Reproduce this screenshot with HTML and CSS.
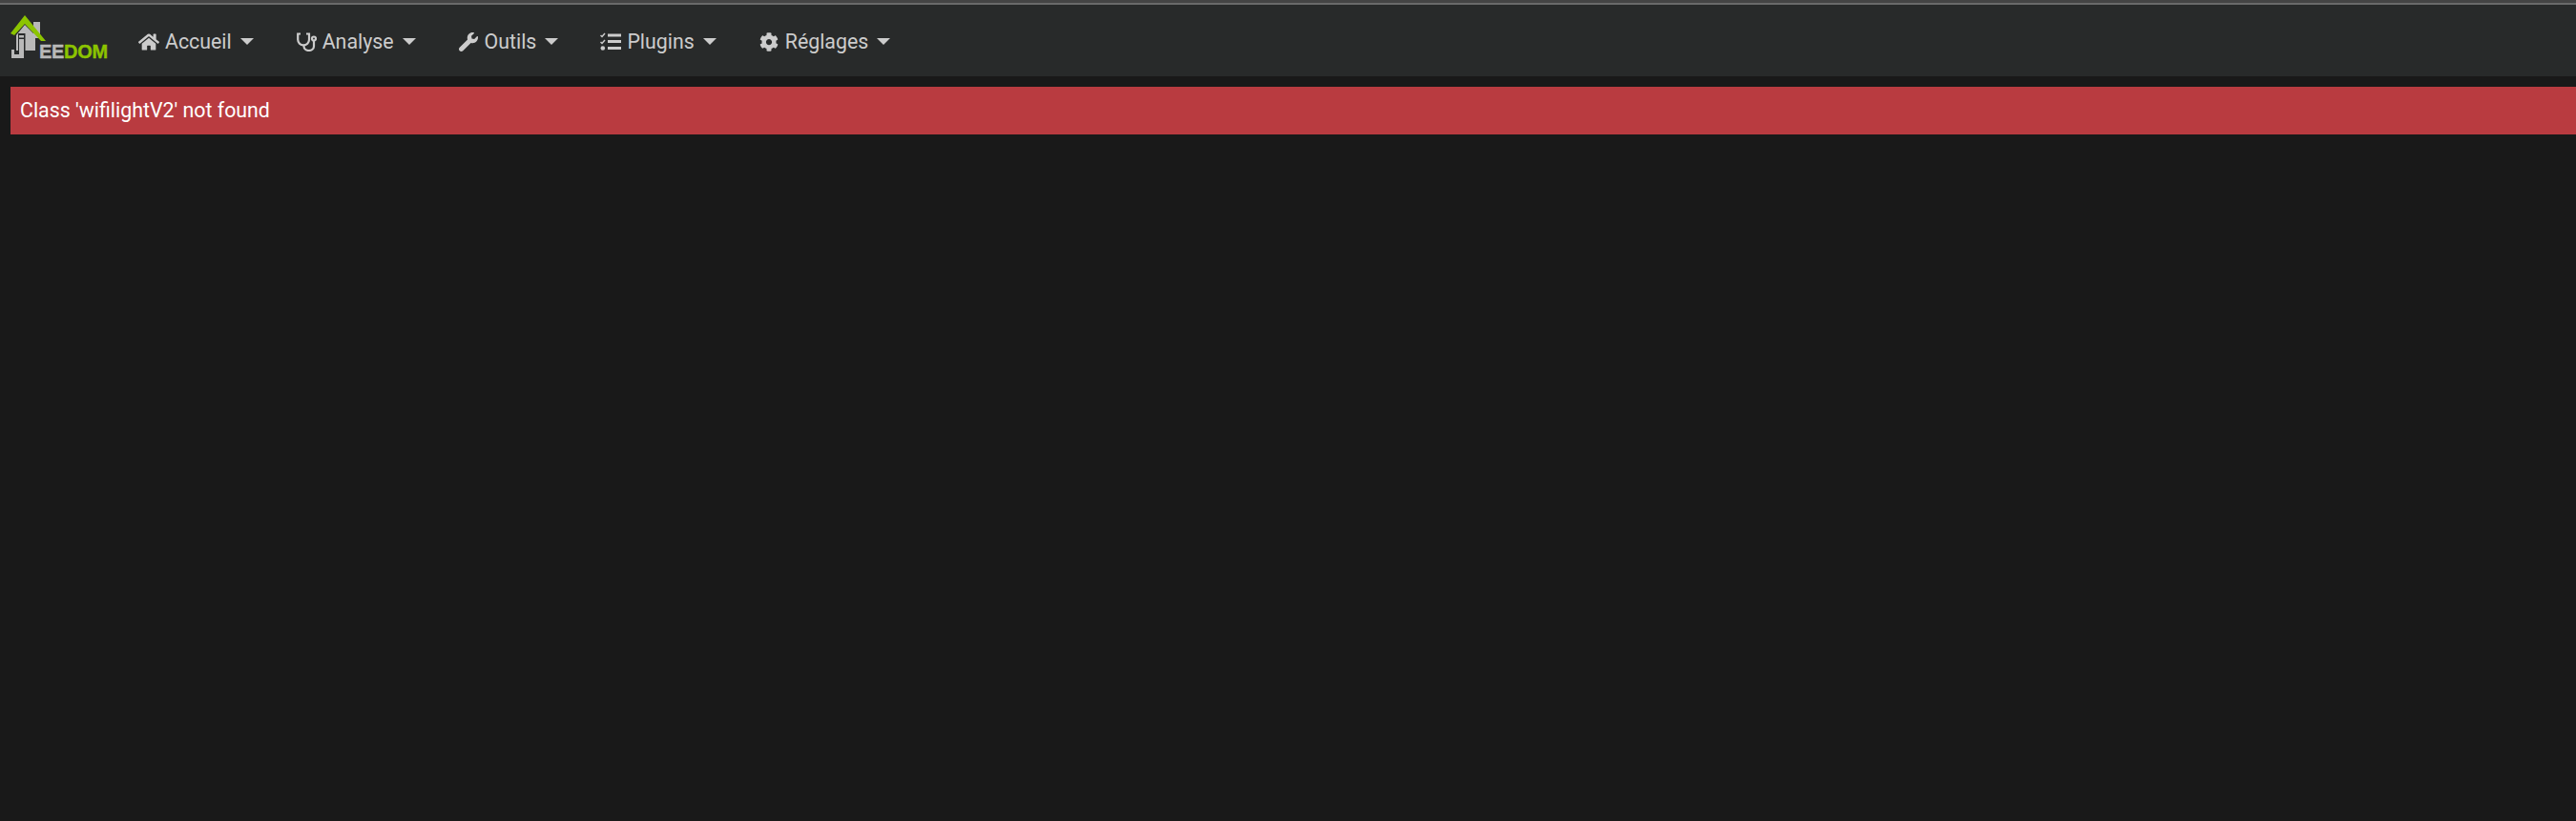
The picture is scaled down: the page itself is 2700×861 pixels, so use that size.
FILE: index.html
```html
<!DOCTYPE html>
<html lang="fr">
<head>
<meta charset="utf-8">
<title>Jeedom</title>
<link rel="stylesheet" href="styles.css">
</head>
<body>
<div class="topline"></div>
<nav class="navbar">
  <a class="brand" href="#">
    <svg class="house" width="38" height="45" viewBox="0 0 38 45">
      <path class="wall" d="M6 21 L15 10 L24 19 L24 7 L31 7 L31 24 L26 24 L26 37 L6 37 Z"/>
      <rect class="dark" x="8" y="19" width="7.500" height="20"/>
      <rect class="wall" x="9" y="21" width="5" height="2.500"/>
      <rect class="wall" x="9" y="25" width="5" height="20"/>
      <path class="wall" d="M1 36 L4 36 L4 41 L9 41 L14 41 L14 45 L1 45 Z"/>
      <path class="roof" d="M0 19 L15 0 L37 27 L32 27 L15 9 L4 21 Z"/>
    </svg>
    <span class="brand-text"><span class="ee">EE</span><span class="dom">DOM</span></span>
  </a>
  <ul class="menu">
    <li class="item">
      <svg class="ico" viewBox="0 0 576 512"><path d="M280.400 148.300 96 300.100V464a16 16 0 0 0 16 16l112-.3a16 16 0 0 0 15.900-16V368a16 16 0 0 1 16-16h64a16 16 0 0 1 16 16v95.600a16 16 0 0 0 16 16l112 .4a16 16 0 0 0 16-16V300L295.700 148.300a12.200 12.200 0 0 0-15.300 0zM571.600 251.500 488 182.600V44.100a12 12 0 0 0-12-12h-56a12 12 0 0 0-12 12v72.600L318.500 43a48 48 0 0 0-61 0L4.300 251.500a12 12 0 0 0-1.600 16.900l25.500 31A12 12 0 0 0 45.200 301l235.200-193.700a12.200 12.200 0 0 1 15.300 0L530.900 301a12 12 0 0 0 16.900-1.600l25.500-31a12 12 0 0 0-1.700-16.900z"/></svg>
      <span>Accueil</span><i class="caret"></i>
    </li>
    <li class="item">
      <svg class="ico" viewBox="0 0 22 20"><path class="line" d="M5 1.500H2.200V7.500a5.900 5.900 0 0 0 11.800 0V1.500H11"/><path class="line" d="M8.500 13v1.500a5.250 4.500 0 0 0 10.500 0V8.500"/><circle class="line" cx="19" cy="6.500" r="2"/></svg>
      <span>Analyse</span><i class="caret"></i>
    </li>
    <li class="item">
      <svg class="ico" viewBox="0 0 512 512"><path d="M507.700 109.100c-2.200-9-13.500-12.100-20.100-5.500l-74.400 74.400-67.900-11.300-11.300-67.900 74.400-74.400c6.600-6.600 3.400-17.900-5.700-20.200-47.400-11.700-99.500.9-136.500 37.900-39.600 39.600-50.700 97.100-34.100 147.200L18.700 402.800c-25 25-25 65.500 0 90.500 25 25 65.500 25 90.500 0l213.200-213.200c50.100 16.700 107.500 5.500 147.300-34.200 37-37 49.700-89.200 38-136.800z"/></svg>
      <span>Outils</span><i class="caret"></i>
    </li>
    <li class="item">
      <svg class="ico" viewBox="0 0 22 20"><path class="tick" d="M.5 3 2 4.500 5 1M.5 10 2 11.500 5 8"/><circle cx="2.800" cy="16.500" r="2.300"/><rect x="8" y="1.500" width="14" height="3"/><rect x="8" y="8" width="14" height="3"/><rect x="8" y="15" width="14" height="3"/></svg>
      <span>Plugins</span><i class="caret"></i>
    </li>
    <li class="item">
      <svg class="ico" viewBox="0 0 512 512"><path d="M487.400 315.700l-42.600-24.600c4.300-23.200 4.300-47 0-70.200l42.600-24.600c4.900-2.800 7.100-8.600 5.500-14-11.100-35.600-30-67.800-54.700-94.600-3.800-4.100-10-5.100-14.800-2.300L380.800 110c-17.900-15.400-38.500-27.300-60.800-35.100V25.800c0-5.600-3.900-10.500-9.400-11.700-36.700-8.200-74.300-7.800-109.200 0-5.500 1.200-9.400 6.100-9.400 11.700V75c-22.200 7.900-42.800 19.800-60.800 35.100L88.700 85.500c-4.900-2.800-11-1.900-14.800 2.300-24.700 26.700-43.600 58.900-54.700 94.600-1.700 5.400.6 11.200 5.500 14L67.300 221c-4.300 23.200-4.300 47 0 70.200l-42.600 24.600c-4.900 2.800-7.100 8.600-5.500 14 11.100 35.600 30 67.800 54.700 94.600 3.800 4.100 10 5.100 14.800 2.300l42.600-24.600c17.900 15.400 38.500 27.300 60.800 35.100v49.200c0 5.600 3.900 10.500 9.400 11.700 36.700 8.200 74.300 7.800 109.200 0 5.500-1.200 9.400-6.100 9.400-11.700v-49.200c22.200-7.900 42.800-19.800 60.800-35.100l42.600 24.600c4.900 2.800 11 1.900 14.800-2.300 24.700-26.700 43.600-58.900 54.700-94.600 1.500-5.500-.7-11.300-5.600-14.100zM256 336c-44.100 0-80-35.900-80-80s35.900-80 80-80 80 35.900 80 80-35.900 80-80 80z"/></svg>
      <span>Réglages</span><i class="caret"></i>
    </li>
  </ul>
</nav>
<main class="content">
  <div class="alert">Class 'wifilightV2' not found</div>
</main>
</body>
</html>
```
FILE: styles.css
```css
* { box-sizing: border-box; }
html, body { margin: 0; height: 100%; }
body {
  background: #191919;
  color: #ccc;
  font-family: Roboto, "Liberation Sans", sans-serif;
  font-size: 21.330px;
  overflow: hidden;
}
.topline {
  height: 5px;
  background: #444;
  border-bottom: 2px solid #6a6a6a;
}
.navbar {
  height: 75px;
  background: #282a2a;
  display: flex;
  align-items: center;
  padding-top: 2px;
}
.brand {
  display: flex;
  align-items: flex-end;
  flex: none;
  width: 103px;
  height: 45px;
  margin-left: 11px;
  margin-top: -10px;
  text-decoration: none;
}
.house { flex: none; }
.wall { fill: #b9b9b9; }
.roof { fill: #8cc400; }
.dark { fill: #282a2a; }
.brand-text {
  font-family: "Liberation Sans", sans-serif;
  font-weight: 700;
  font-size: 20px;
  line-height: 14px;
  letter-spacing: -0.3px;
  margin-left: -8px;
  -webkit-text-stroke: 0.4px currentColor;
}
.ee { color: #b9b9b9; }
.dom { color: #8cc400; }
.menu {
  list-style: none;
  margin: 0 0 0 31px;
  padding: 0;
  display: flex;
  gap: 44px;
}
.item {
  display: flex;
  align-items: center;
  color: #ccc;
  line-height: 26px;
}
.ico {
  width: 22px;
  height: 20px;
  margin-right: 6px;
  fill: #ccc;
}
.line { fill: none; stroke: #ccc; stroke-width: 2.200; }
.tick { fill: none; stroke: #ccc; stroke-width: 1.500; }
.caret {
  width: 0;
  height: 0;
  margin-left: 9px;
  border-left: 7.500px solid transparent;
  border-right: 7.500px solid transparent;
  border-top: 7.500px solid #ccc;
}
.content { padding: 11px 0 0 11px; }
.alert {
  height: 50px;
  padding-left: 10px;
  background: #b93b40;
  color: #fff;
  line-height: 50px;
}
```
